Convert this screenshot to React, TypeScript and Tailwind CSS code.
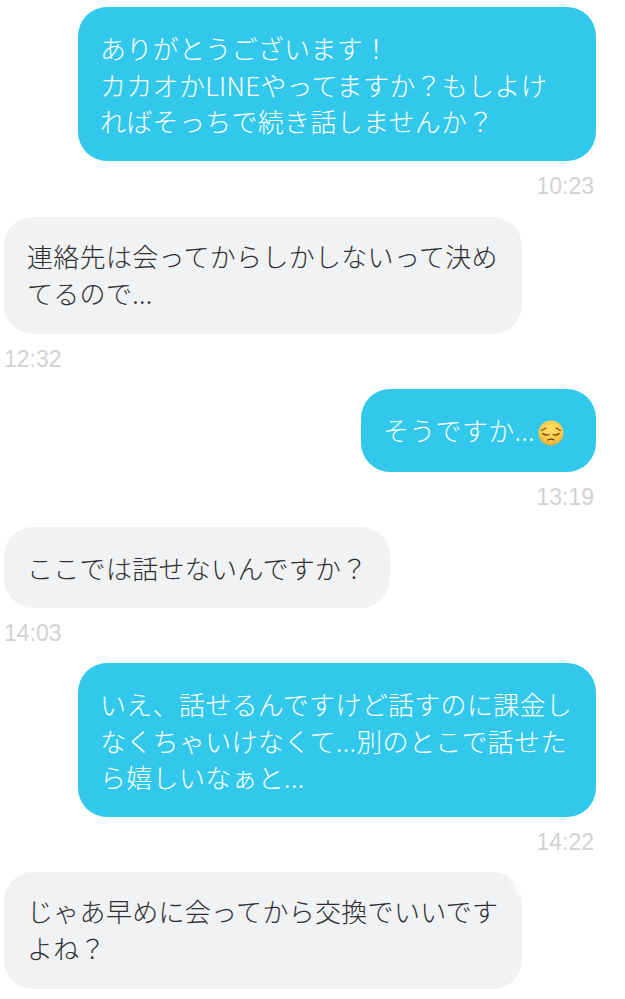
import type { ReactNode } from 'react'

const bubbleText = 'text-[26px] leading-[36.5px] tracking-[0.3px] font-light whitespace-nowrap'

function Sad() {
  return (
    <svg width="26" height="26" viewBox="0 0 26 26" className="ml-[3px] inline-block align-[-5px]">
      <defs>
        <radialGradient id="face" cx="50%" cy="35%" r="70%">
          <stop offset="0%" stopColor="#ffe06a" />
          <stop offset="70%" stopColor="#fcc545" />
          <stop offset="100%" stopColor="#e8962a" />
        </radialGradient>
      </defs>
      <circle cx="13" cy="13" r="12.5" fill="url(#face)" />
      <path d="M3.500 10.500l4.500-2.500M22.500 10.500l-4.500-2.500" stroke="#7a4a1e" strokeWidth="1.1" fill="none" strokeLinecap="round" />
      <path d="M5 13.500q2.500 2.500 6 1M21 13.500q-2.500 2.500-6 1" stroke="#5a3518" strokeWidth="1.2" fill="none" strokeLinecap="round" />
      <path d="M10 20q3-1.800 6 0" stroke="#5a3518" strokeWidth="1.3" fill="none" strokeLinecap="round" />
    </svg>
  )
}

function Time({ value, sent }: { value: string; sent?: boolean }) {
  return (
    <div className={`mt-[10px] mb-[15px] text-[23px] leading-[30px] text-[#d2d2d4] ${sent ? 'mr-[2px]' : ''}`} style={{ fontFamily: '"Liberation Sans", sans-serif' }}>
      {value}
    </div>
  )
}

function Sent({ box, time, children }: { box: string; time: string; children: ReactNode }) {
  return (
    <div className="flex flex-col items-end pr-[29px]">
      <div className={`${box} rounded-[29px] bg-[#32c8ec] pl-[22px] pt-[23px] ${bubbleText} text-white`}>
        {children}
      </div>
      <Time value={time} sent />
    </div>
  )
}

function Received({ box, time, children }: { box: string; time?: string; children: ReactNode }) {
  return (
    <div className="flex flex-col items-start pl-[4px]">
      <div className={`${box} relative rounded-[29px] bg-[#f1f2f4] pl-[23px] ${bubbleText} text-[#2e2e32]`}>
        {children}
      </div>
      {time && <Time value={time} />}
    </div>
  )
}

export default function App() {
  return (
    <div className="h-[999px] w-[625px] overflow-hidden bg-white pt-[7px]" style={{ fontFamily: '"Noto Sans CJK JP", sans-serif' }}>
      <div className="mb-px">
        <Sent box="w-[518px] h-[154px]" time="10:23">ありがとうございます！<br />カカオかLINEやってますか？もしよけ<br />ればそっちで続き話しませんか？</Sent>
      </div>
      <Received box="w-[518px] h-[117px] pt-[21px]" time="12:32">連絡先は会ってからしかしないって決め<br />てるので...</Received>
      <Sent box="w-[235px] h-[83px]" time="13:19">そうですか...<Sad /></Sent>
      <Received box="w-[386px] h-[81px] pt-[23px]" time="14:03">ここでは話せないんですか？</Received>
      <Sent box="w-[518px] h-[154px]" time="14:22">いえ、話せるんですけど話すのに課金し<br />なくちゃいけなくて...別のとこで話せた<br />ら嬉しいなぁと...</Sent>
      <Received box="w-[518px] h-[117px] pt-[21px]">
        じゃあ早めに会ってから交換でいいです<br />よね？
        <span className="absolute top-[3px] right-[-3px] h-[24px] w-[9px] -rotate-[30deg] bg-white blur-[2px]" />
      </Received>
    </div>
  )
}
